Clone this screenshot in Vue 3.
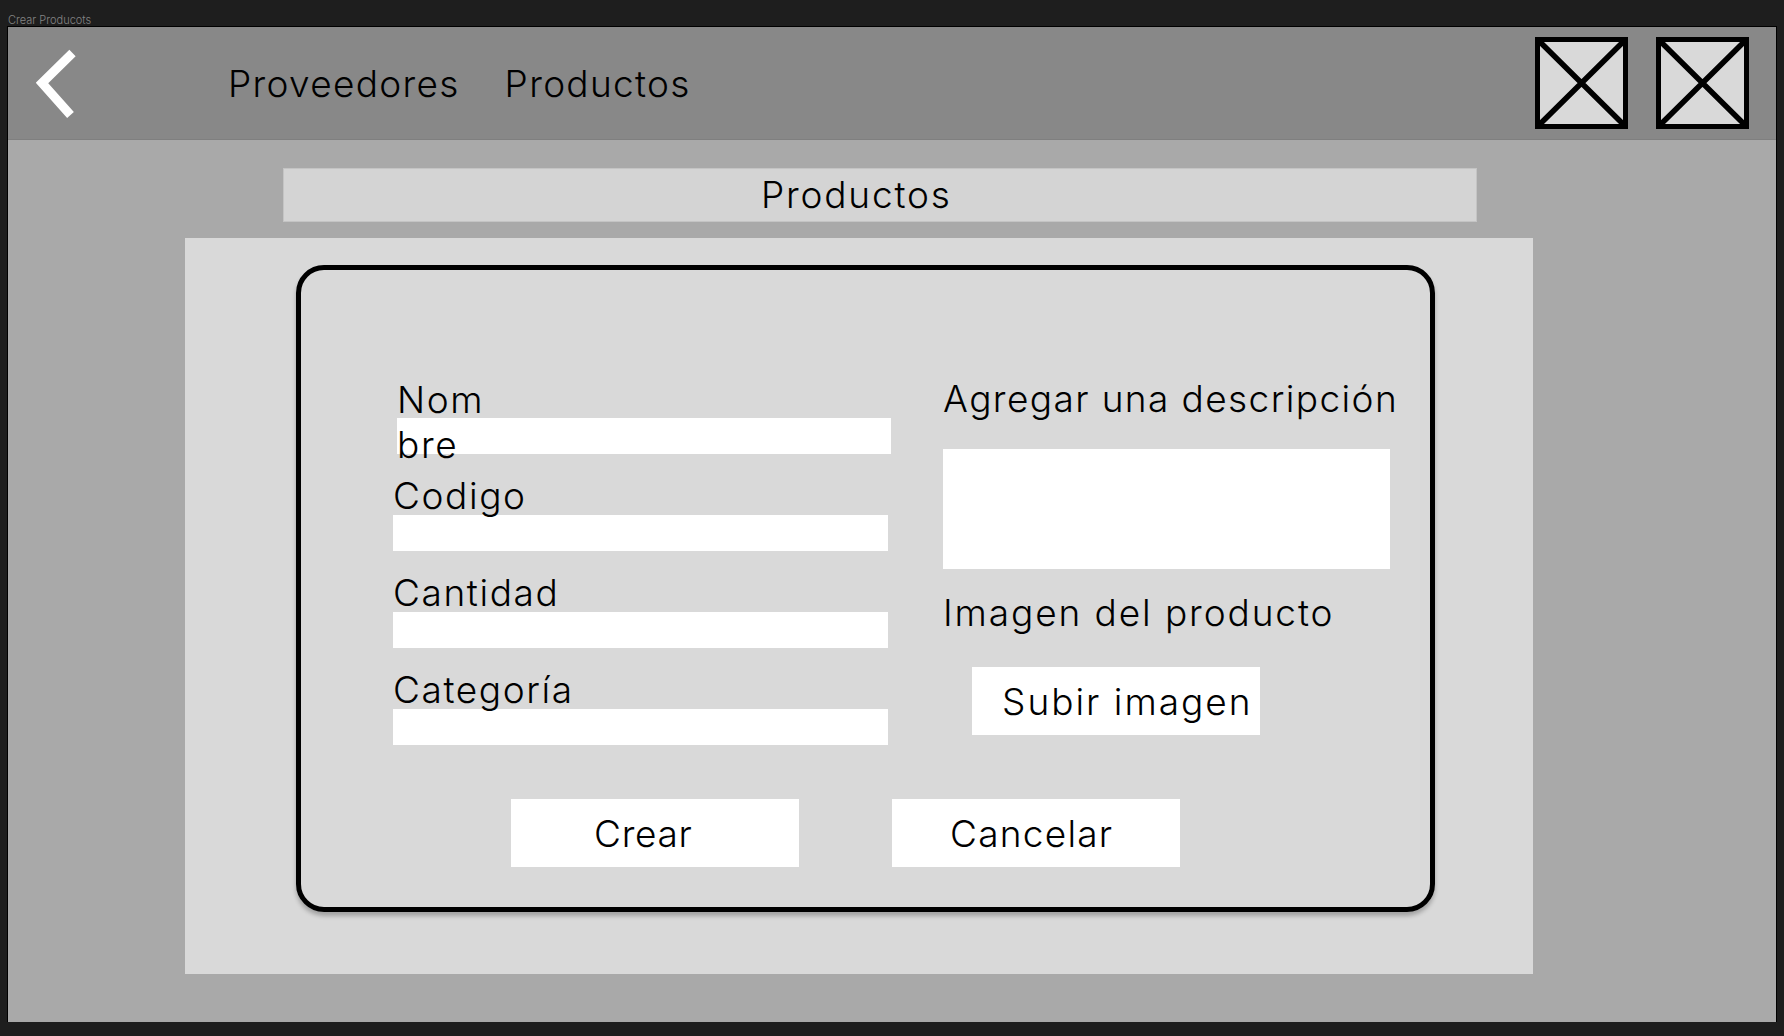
<script setup>
const fields = ['Codigo', 'Cantidad', 'Categoría']
</script>

<template>
  <div class="frame-name">Crear Producots</div>
  <main class="artboard">
    <header class="topbar">
      <a class="back" aria-label="Volver">
        <svg width="48" height="72" viewBox="0 0 48 72">
          <path d="M36.500 6 L6 36 L34.500 68" fill="none" stroke="#fff" stroke-width="9" />
        </svg>
      </a>
      <nav class="nav">
        <a>Proveedores</a>
        <a>Productos</a>
      </nav>
      <div class="placeholders">
        <svg v-for="n in 2" :key="n" width="93" height="92" viewBox="0 0 93 92">
          <rect x="2.500" y="2.500" width="88" height="87" fill="#d9d9d9" stroke="#000" stroke-width="5" />
          <path d="M3 3 L90 89 M90 3 L3 89" stroke="#000" stroke-width="5.500" />
        </svg>
      </div>
    </header>

    <h1 class="section-title">Productos</h1>

    <section class="panel">
      <form class="card" @submit.prevent>
        <div class="columns">
          <div class="col-left">
            <div class="field field-name">
              <label class="name-label">Nombre</label>
              <input type="text" />
            </div>
            <div v-for="f in fields" :key="f" class="field">
              <label>{{ f }}</label>
              <input type="text" />
            </div>
          </div>
          <div class="col-right">
            <label class="desc-label">Agregar una descripción</label>
            <textarea></textarea>
            <label class="img-label">Imagen del producto</label>
            <button type="button" class="upload">Subir imagen</button>
          </div>
        </div>
        <div class="actions">
          <button type="submit" class="btn-create">Crear</button>
          <button type="button" class="btn-cancel">Cancelar</button>
        </div>
      </form>
    </section>
  </main>
</template>

<style>
html, body {
  margin: 0;
  background: #1e1e1e;
}
</style>

<style scoped>
.frame-name {
  height: 27px;
  padding: 13px 0 0 8px;
  box-sizing: border-box;
  font: 300 11px/14px Inter, sans-serif;
  color: #858585;
}

.artboard {
  width: 1768px;
  height: 995px;
  margin-left: 8px;
  background: #a9a9a9;
  outline: 1px solid #000;
  overflow: hidden;
  font-family: Inter, sans-serif;
  font-weight: 300;
  font-size: 37px;
  color: #000;
}

.topbar {
  height: 113px;
  box-sizing: border-box;
  display: flex;
  align-items: center;
  background: #888;
  border-bottom: 1px solid #7f7f7f;
}

.back {
  display: block;
  width: 48px;
  height: 72px;
  margin-left: 28px;
}

.nav {
  display: flex;
  gap: 45px;
  margin-left: 144px;
  padding-top: 1px;
  letter-spacing: 1.3px;
}

.placeholders {
  display: flex;
  gap: 28px;
  margin-left: auto;
  margin-right: 27px;
}

.section-title {
  width: 1194px;
  height: 54px;
  box-sizing: border-box;
  margin: 28px 0 0 275px;
  padding-left: 477px;
  background: #d4d4d4;
  border: 1px solid #c4c4c4;
  font-size: 37px;
  font-weight: 300;
  line-height: 52px;
  letter-spacing: 1.8px;
}

.panel {
  width: 1348px;
  height: 736px;
  box-sizing: border-box;
  margin: 16px 0 0 177px;
  padding: 27px 0 0 111px;
  background: #d9d9d9;
}

.card {
  width: 1139px;
  height: 647px;
  box-sizing: border-box;
  padding: 90px 0 0 92px;
  border: 5px solid #000;
  border-radius: 28px;
  box-shadow: 0 4px 4px rgba(0, 0, 0, 0.25);
}

.columns {
  display: flex;
  height: 390px;
}

.col-left {
  width: 550px;
  margin-top: -3px;
}

.field {
  position: relative;
  display: flex;
  flex-direction: column;
  justify-content: flex-end;
  height: 97px;
  width: 495px;
}

.field label {
  position: relative;
  z-index: 1;
  line-height: 34px;
  letter-spacing: 1.6px;
  margin-bottom: 2px;
}

input, textarea {
  display: block;
  box-sizing: border-box;
  border: 0;
  padding: 0;
  background: #fff;
  outline: 0;
  resize: none;
}

.field input {
  width: 100%;
  height: 36px;
}

.field-name {
  margin-left: 4px;
  width: 494px;
}

.field-name .name-label {
  position: absolute;
  left: 0;
  top: 20px;
  width: 100px;
  line-height: 45px;
  margin: 0;
  word-break: break-all;
}

.col-right {
  display: flex;
  flex-direction: column;
  align-items: flex-start;
  padding-top: 19px;
}

.col-right label {
  line-height: 40px;
  white-space: nowrap;
}

.desc-label {
  letter-spacing: 1.4px;
}

textarea {
  width: 447px;
  height: 120px;
  margin-top: 30px;
}

.col-right .img-label {
  margin-top: 24px;
  letter-spacing: 1.9px;
}

button {
  display: block;
  box-sizing: border-box;
  height: 68px;
  border: 0;
  background: #fff;
  text-align: left;
  font: inherit;
  letter-spacing: 1.25px;
  color: #000;
  padding-top: 0;
  padding-bottom: 0;
}

.upload {
  width: 288px;
  margin: 34px 0 0 29px;
  padding-left: 30px;
  padding-right: 0;
  white-space: nowrap;
  letter-spacing: 2px;
}

.actions {
  display: flex;
  gap: 93px;
  margin: 49px 0 0 118px;
}

.actions button {
  width: 288px;
}

.btn-create {
  padding-left: 83px;
  letter-spacing: 0.7px;
}

.btn-cancel {
  padding-left: 58px;
}
</style>
